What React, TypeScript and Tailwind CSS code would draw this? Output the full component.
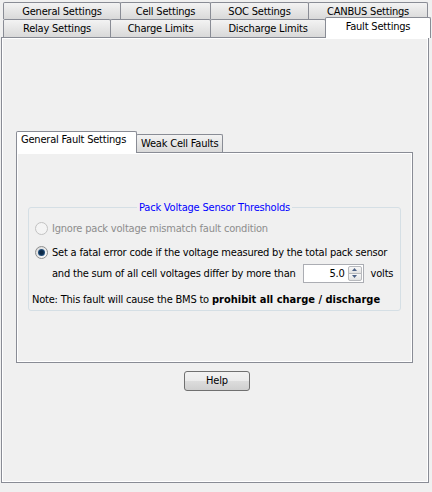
import React from 'react';

type Tab = { label: string; w: string };

const rowOne: Tab[] = [
  { label: 'General Settings', w: 'w-[118px]' },
  { label: 'Cell Settings', w: 'w-[91px]' },
  { label: 'SOC Settings', w: 'w-[99px]' },
  { label: 'CANBUS Settings', w: 'w-[120px]' },
];

const rowTwo: Tab[] = [
  { label: 'Relay Settings', w: 'w-[108px]' },
  { label: 'Charge Limits', w: 'w-[101px]' },
  { label: 'Discharge Limits', w: 'w-[116px]' },
];

const Radio: React.FC<{ checked?: boolean; disabled?: boolean }> = ({ checked, disabled }) => (
  <div
    className={
      disabled
        ? 'flex h-[13px] w-[13px] shrink-0 items-center justify-center rounded-full border border-[#c2c2c2] bg-[#f4f4f4]'
        : 'flex h-[13px] w-[13px] shrink-0 items-center justify-center rounded-full border border-[#8e8f8f] bg-linear-to-br from-[#d6d6d6] to-[#ffffff]'
    }
  >
    {checked && (
      <div className="h-[7px] w-[7px] rounded-full bg-[radial-gradient(circle,#0d2a48_35%,#3f7fbd_100%)]" />
    )}
  </div>
);

const SpinBox: React.FC<{ value: string }> = ({ value }) => (
  <div className="flex h-[19px] w-[61px] shrink-0 border border-[#abadb3] bg-white">
    <div className="flex-1 pr-[3px] text-right leading-[17px]">{value}</div>
    <div className="my-px mr-px flex w-[14px] flex-col">
      <div className="flex flex-1 items-center justify-center rounded-t-[2px] border border-[#b7b9bd] bg-linear-to-b from-[#f8f8f8] to-[#e2e2e2]">
        <svg width="5" height="3" viewBox="0 0 5 3">
          <path d="M0 3h5L2.5 0z" fill="#4d6185" />
        </svg>
      </div>
      <div className="-mt-px flex flex-1 items-center justify-center rounded-b-[2px] border border-[#b7b9bd] bg-linear-to-b from-[#f8f8f8] to-[#e2e2e2]">
        <svg width="5" height="3" viewBox="0 0 5 3">
          <path d="M0 0h5L2.5 3z" fill="#4d6185" />
        </svg>
      </div>
    </div>
  </div>
);

const App: React.FC = () => {
  return (
    <div className="h-[492px] w-[432px] overflow-hidden whitespace-nowrap bg-[#f0f0f0] pt-[2px] font-['DejaVu_Sans_Condensed','DejaVu_Sans',sans-serif] text-[11px] leading-[13px] tracking-[-0.2px] text-black font-stretch-condensed">
      {/* top tab strip, two rows */}
      <div className="flex h-[17px] pl-[3px]">
        {rowOne.map((t, i) => (
          <div
            key={t.label}
            className={`${t.w} ${i > 0 ? '-ml-px' : ''} h-full rounded-t-[2px] border border-b-0 border-[#898c95] bg-linear-to-b from-[#f3f3f3] to-[#d9d9d9] pt-[2px] text-center`}
          >
            {t.label}
          </div>
        ))}
      </div>
      <div className="flex h-[18px] items-start pl-[3px]">
        {rowTwo.map((t, i) => (
          <div
            key={t.label}
            className={`${t.w} ${i > 0 ? '-ml-px' : ''} h-full rounded-t-[2px] border border-b-0 border-[#898c95] bg-linear-to-b from-[#f3f3f3] to-[#d9d9d9] pt-[2px] text-center`}
          >
            {t.label}
          </div>
        ))}
        <div className="relative z-10 -ml-px -mt-[2px] h-[21px] w-[106px] rounded-t-[2px] border border-b-0 border-[#898c95] bg-white pt-[2px] text-center">
          Fault Settings
        </div>
      </div>

      <div className="ml-px h-[446px] w-[428px] border border-[#898c95] bg-[#f0f0f0] pl-[14px] pt-[93px] shadow-[inset_1px_1px_0_#fff,inset_-1px_-1px_0_#fff]">
        <div className="flex h-[21px] items-end">
          <div className="relative z-10 h-[22px] w-[121px] self-start rounded-t-[2px] border border-b-0 border-[#898c95] bg-white pl-[4px] pt-px">
            General Fault Settings
          </div>
          <div className="-ml-px h-[18px] w-[87px] rounded-t-[2px] border border-b-0 border-[#898c95] bg-linear-to-b from-[#f3f3f3] to-[#d9d9d9] pl-[4px] pt-[2px]">
            Weak Cell Faults
          </div>
        </div>

        <div className="h-[211px] w-[397px] border border-[#898c95] bg-[#f0f0f0] pl-[11px] pt-[48px] shadow-[inset_1px_1px_0_#fff,inset_-1px_-1px_0_#fff]">
          <fieldset className="w-[373px] rounded-[3px] border border-[#d5dfe5] pb-px">
            <legend className="mx-auto px-[2px] text-[#0000ff]">Pack Voltage Sensor Thresholds</legend>

            <div className="mt-[4px] flex h-[20px] items-center gap-[4px] pl-[6px] text-[#8d8d8d]">
              <Radio disabled />
              <span>Ignore pack voltage mismatch fault condition</span>
            </div>

            <div className="mt-[4px] flex h-[20px] items-center gap-[4px] pl-[6px]">
              <Radio checked />
              <span>Set a fatal error code if the voltage measured by the total pack sensor</span>
            </div>

            <div className="mt-px flex h-[20px] items-center gap-[7px] pl-[23px]">
              <span>and the sum of all cell voltages differ by more than</span>
              <SpinBox value="5.0" />
              <span>volts</span>
            </div>

            <div className="mt-[6px] flex h-[20px] items-center pl-[3px]">
              <span>
                Note: This fault will cause the BMS to{' '}
                <b className="font-bold tracking-normal">prohibit all charge / discharge</b>
              </span>
            </div>
          </fieldset>
        </div>

        <div className="mt-[8px] pl-[168px]">
          <button className="h-[20px] w-[66px] rounded-[3px] border border-[#707070] bg-[linear-gradient(#f2f2f2,#ebebeb_50%,#dddddd_50%,#cfcfcf)] text-center leading-[18px]">
            Help
          </button>
        </div>
      </div>
    </div>
  );
};

export default App;
